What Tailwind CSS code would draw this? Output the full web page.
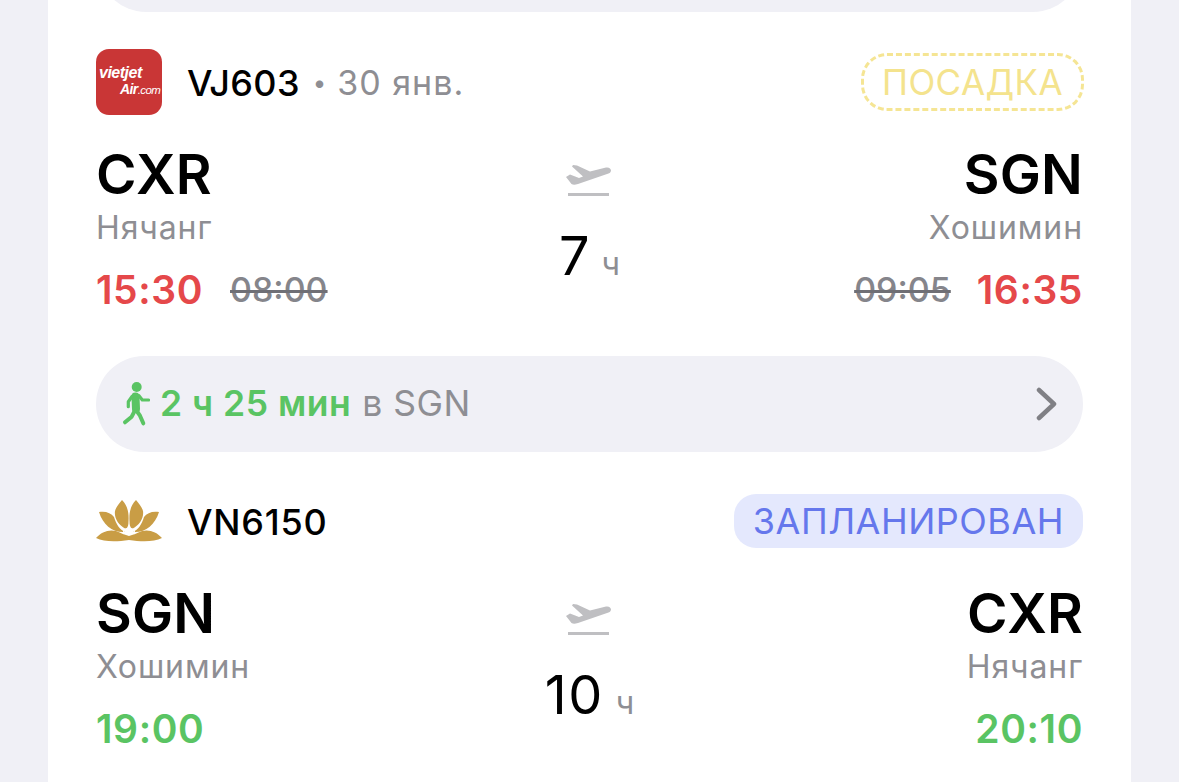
<!DOCTYPE html>
<html lang="ru">
<head>
<meta charset="utf-8">
<title>Flights</title>
<script src="https://cdn.jsdelivr.net/npm/@tailwindcss/browser@4"></script>
</head>
<body class="bg-[#f0f0f6] font-['Inter','Liberation_Sans',sans-serif] h-[782px] overflow-hidden">
<div class="mx-[48px] w-[1083px] h-[782px] bg-white px-[48px] overflow-hidden">

  <!-- previous card's pill, cut off by the screen -->
  <div class="-mt-[84px] mx-[2px] h-[96px] rounded-[48px] bg-[#f0f0f6]"></div>

  <!-- VJ603 -->
  <div class="mt-[36px] flex items-center justify-between h-[67px]">
    <div class="flex items-center">
      <div class="w-[66px] h-[66px] rounded-[13px] bg-[#c93636] flex flex-col justify-center text-white italic font-bold font-['Liberation_Sans',sans-serif] leading-[17px] overflow-hidden">
        <span class="text-[16px] pl-[3px] tracking-[-0.5px]">vietjet</span>
        <span class="text-[14px] pl-[24px] tracking-[-0.6px] whitespace-nowrap">Air<span class="text-[11.5px] font-normal">.com</span></span>
      </div>
      <span class="ml-[25px] mt-[2px] text-[36px] leading-[44px] font-medium text-black tracking-[0.3px]">VJ603</span>
      <span class="ml-[13px] mt-[2px] text-[24px] text-[#8e8e93]">•</span>
      <span class="ml-[11px] mt-[2px] text-[34px] leading-[44px] text-[#8e8e93] tracking-[1px]">30 янв.</span>
    </div>
    <div class="h-[58px] mr-[-1px] px-[18px] pt-[2px] flex items-center rounded-[26px] border-[3px] border-dashed border-[#f5e594] text-[35px] text-[#f4e38d] tracking-[0.4px]">ПОСАДКА</div>
  </div>

  <div class="mt-[29px] grid grid-cols-[1fr_auto_1fr] h-[186px]">
    <div>
      <div class="text-[55px] leading-[60px] font-semibold text-black tracking-[0.2px]">CXR</div>
      <div class="mt-[6px] text-[32px] leading-[36px] text-[#8e8e93] tracking-[0.9px]">Нячанг</div>
      <div class="mt-[22px] flex items-center leading-[44px]">
        <span class="text-[39px] font-semibold tracking-[0.6px] text-[#e5484a]">15:30</span>
        <span class="ml-[27px] text-[34px] font-medium text-[#85858b] line-through decoration-[3px] decoration-[#6f6f75]">08:00</span>
      </div>
    </div>
    <div class="flex flex-col items-center pt-[21px]">
      <svg class="w-[46px] h-[32px]" viewBox="0 0 46 32" fill="#bfbfc2">
        <path d="M7 0 L11 0.5 L24 6.5 L40 2.5 C45 1.5 47 7 42.5 8.5 L12 19 C9 20 7 20 5.5 19 L0 12 L4 9.5 L13 13 L17 11.5 L6 1.5 Z"/>
        <rect x="2" y="28" width="41" height="3"/>
      </svg>
      <div class="mt-[25px] flex items-baseline">
        <span class="text-[54px] leading-[68px] text-black">7</span>
        <span class="ml-[12px] text-[32px] text-[#8e8e93]">ч</span>
      </div>
    </div>
    <div class="text-right">
      <div class="text-[55px] leading-[60px] font-semibold text-black tracking-[0.2px]">SGN</div>
      <div class="mt-[6px] text-[32px] leading-[36px] text-[#8e8e93] tracking-[0.9px]">Хошимин</div>
      <div class="mt-[22px] flex items-center justify-end leading-[44px]">
        <span class="text-[34px] font-medium text-[#85858b] line-through decoration-[3px] decoration-[#6f6f75]">09:05</span>
        <span class="ml-[26px] text-[39px] font-semibold tracking-[0.6px] text-[#e5484a]">16:35</span>
      </div>
    </div>
  </div>

  <!-- connection -->
  <div class="mt-[26px] h-[96px] rounded-[48px] bg-[#f0f0f6] pl-[26px] pr-[25px] flex items-center justify-between">
    <div class="flex items-center text-[35.5px] tracking-[0.5px]">
      <svg class="w-[28px] h-[44px]" viewBox="0 0 28 44" fill="none" stroke="#5ac463" stroke-linecap="round" stroke-linejoin="round">
        <circle cx="14.7" cy="5" r="5" fill="#5ac463" stroke="none"/>
        <path d="M13.5 14.5 L14 27" stroke-width="8"/>
        <path d="M10 14.5 L6.3 19.7 L6.3 24.7" stroke-width="3.2"/>
        <path d="M17 13.7 L20.3 18 L26.5 18" stroke-width="3.2"/>
        <path d="M12.3 29.7 L9.7 34.7 L3 40.3" stroke-width="4"/>
        <path d="M14.7 29 L18 33.7 L21.3 41.3" stroke-width="4"/>
      </svg>
      <span class="ml-[10px] font-semibold text-[#5ac463]">2 ч 25 мин</span>
      <span class="ml-[11px] text-[#8e8e93]">в SGN</span>
    </div>
    <svg class="w-[22px] h-[34px]" viewBox="0 0 22 34" fill="none" stroke="#808085" stroke-width="4.5" stroke-linecap="round" stroke-linejoin="round">
      <path d="M3 3 L18 17 L3 31"/>
    </svg>
  </div>

  <!-- VN6150 -->
  <div class="mt-[42px] flex items-center justify-between h-[54px]">
    <div class="flex items-center">
      <svg class="w-[66px] h-[42px]" viewBox="0 0 66 42" fill="#c99d45">
        <path d="M26 0 C32 6 33 14 32.5 21 C32.5 25 32 27 30 29 C22 25 18 18 19 11 C20 7 23 4 26 0 Z"/>
        <path d="M3 12 C10 11 15 13 18 17 C20 24 24 30 29 32 C17 33 7 25 3 12 Z"/>
        <path d="M0 38 C5 32 13 29 20 31 C25 33 29 35 33 36 L33 40 C20 42 8 42 0 38 Z"/>
        <g transform="matrix(-1 0 0 1 66 0)">
          <path d="M26 0 C32 6 33 14 32.5 21 C32.5 25 32 27 30 29 C22 25 18 18 19 11 C20 7 23 4 26 0 Z"/>
          <path d="M3 12 C10 11 15 13 18 17 C20 24 24 30 29 32 C17 33 7 25 3 12 Z"/>
          <path d="M0 38 C5 32 13 29 20 31 C25 33 29 35 33 36 L33 40 C20 42 8 42 0 38 Z"/>
        </g>
        <path d="M28 34 C25 26 41 26 38 34" fill="none" stroke="#fff" stroke-width="1.2"/>
      </svg>
      <span class="ml-[25px] mt-[2px] text-[36px] leading-[44px] font-medium text-black tracking-[0.8px]">VN6150</span>
    </div>
    <div class="h-[54px] px-[19px] flex items-center rounded-[22px] bg-[#e4e8fd] text-[36px] text-[#6577ec] tracking-[0.5px]">ЗАПЛАНИРОВАН</div>
  </div>

  <div class="mt-[35px] grid grid-cols-[1fr_auto_1fr] h-[186px]">
    <div>
      <div class="text-[55px] leading-[60px] font-semibold text-black tracking-[0.2px]">SGN</div>
      <div class="mt-[6px] text-[32px] leading-[36px] text-[#8e8e93] tracking-[0.9px]">Хошимин</div>
      <div class="mt-[22px] text-[39px] leading-[44px] font-semibold tracking-[0.6px] text-[#5ac463]">19:00</div>
    </div>
    <div class="flex flex-col items-center pt-[21px]">
      <svg class="w-[46px] h-[32px]" viewBox="0 0 46 32" fill="#bfbfc2">
        <path d="M7 0 L11 0.5 L24 6.5 L40 2.5 C45 1.5 47 7 42.5 8.5 L12 19 C9 20 7 20 5.5 19 L0 12 L4 9.5 L13 13 L17 11.5 L6 1.5 Z"/>
        <rect x="2" y="28" width="41" height="3"/>
      </svg>
      <div class="mt-[25px] flex items-baseline">
        <span class="text-[54px] leading-[68px] text-black tracking-[1.5px]">10</span>
        <span class="ml-[12px] text-[32px] text-[#8e8e93]">ч</span>
      </div>
    </div>
    <div class="text-right">
      <div class="text-[55px] leading-[60px] font-semibold text-black tracking-[0.2px]">CXR</div>
      <div class="mt-[6px] text-[32px] leading-[36px] text-[#8e8e93] tracking-[0.9px]">Нячанг</div>
      <div class="mt-[22px] text-[39px] leading-[44px] font-semibold tracking-[0.6px] text-[#5ac463]">20:10</div>
    </div>
  </div>

</div>
</body>
</html>
